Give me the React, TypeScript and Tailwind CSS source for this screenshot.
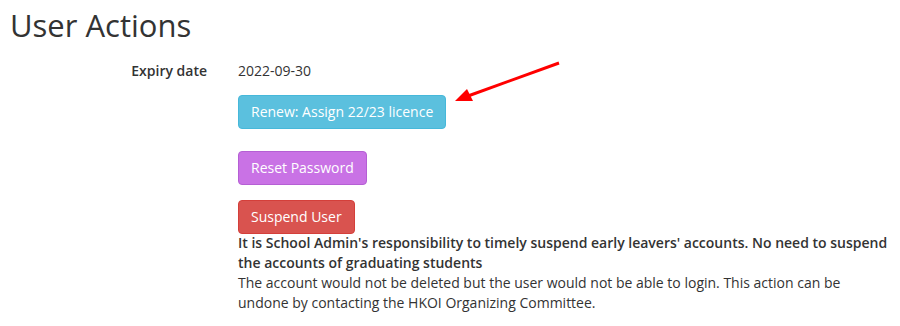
import React from "react";

const font = { fontFamily: '"Open Sans", "Liberation Sans", sans-serif' };

const btn =
  "inline-block px-3 py-[6px] text-sm leading-5 text-white border rounded-[4px] whitespace-nowrap";

export default function App() {
  return (
    <div className="relative w-[900px] h-[326px] bg-white text-[#333] overflow-hidden" style={font}>
      <h1 className="pl-[10px] pt-[9px] text-[31px] leading-[33px] font-medium text-[#333]">
        User Actions
      </h1>

      <div className="flex mt-[19px]">
        <div className="w-[208px] shrink-0 pr-[1px] text-right text-sm leading-5 font-semibold">
          Expiry date
        </div>
        <div className="w-[650px] ml-[30px] text-sm leading-5">
          <div>2022-09-30</div>

          <div className="mt-[14px]">
            <button className={`${btn} bg-[#5bc0de] border-[#46b8da]`}>Renew: Assign 22/23 licence</button>
          </div>

          <div className="mt-[22px]">
            <button className={`${btn} bg-[#c972e5] border-[#b55fd4]`}>Reset Password</button>
          </div>

          <div className="mt-[15px]">
            <button className={`${btn} bg-[#d9534f] border-[#d43f3a]`}>Suspend User</button>
          </div>

          <p className="font-semibold mt-[-1px]">
            It is School Admin's responsibility to timely suspend early leavers' accounts. No need to suspend
            the accounts of graduating students
          </p>
          <p>
            The account would not be deleted but the user would not be able to login. This action can be
            undone by contacting the HKOI Organizing Committee.
          </p>
        </div>
      </div>

      <svg className="absolute left-0 top-0 pointer-events-none" width="900" height="326">
        <line x1="559" y1="63" x2="468" y2="96" stroke="#ff0000" strokeWidth="3" />
        <polygon points="455,101 467,89 473,101" fill="#ff0000" />
      </svg>
    </div>
  );
}
